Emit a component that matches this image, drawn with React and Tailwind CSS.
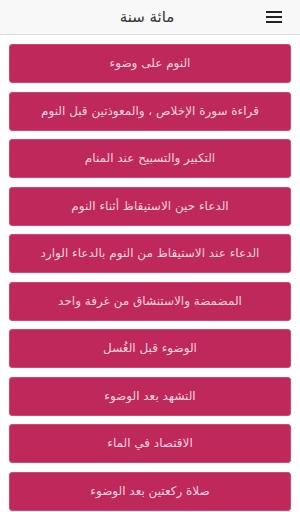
import React from 'react';

const items = [
  'النوم على وضوء',
  'قراءة سورة الإخلاص ، والمعوذتين قبل النوم',
  'التكبير والتسبيح عند المنام',
  'الدعاء حين الاستيقاظ أثناء النوم',
  'الدعاء عند الاستيقاظ من النوم بالدعاء الوارد',
  'المضمضة والاستنشاق من غرفة واحد',
  'الوضوء قبل الغُسل',
  'التشهد بعد الوضوء',
  'الاقتصاد في الماء',
  'صلاة ركعتين بعد الوضوء',
];

export default function App() {
  return (
    <div dir="rtl" className="w-[300px] h-[512px] overflow-hidden bg-white" style={{ fontFamily: '"DejaVu Sans", "Noto Sans", sans-serif' }}>
      {/* Header */}
      <div className="h-[35px] bg-[#f8f8f8] border-b border-[#dcdcdc] flex items-center justify-between px-[18px]">
        <div className="flex flex-col gap-[3.5px] w-[16px]">
          <span className="block h-[1.5px] bg-[#222]"></span>
          <span className="block h-[1.5px] bg-[#222]"></span>
          <span className="block h-[1.5px] bg-[#222]"></span>
        </div>
        <h1 className="text-[15px] text-[#333] -translate-x-[3px]">مائة سنة</h1>
        <div className="w-[16px]"></div>
      </div>

      {/* List */}
      <div className="flex flex-col gap-[8.5px] px-[9px] pt-[9px]">
        {items.map((t, i) => (
          <button
            key={i}
            className="h-[39px] w-full rounded-[3px] bg-[#be285a] border border-[#d5457a] text-[#f6d3df] text-[12px] flex items-center justify-center pb-[1px]"
          >
            {t}
          </button>
        ))}
      </div>
    </div>
  );
}
